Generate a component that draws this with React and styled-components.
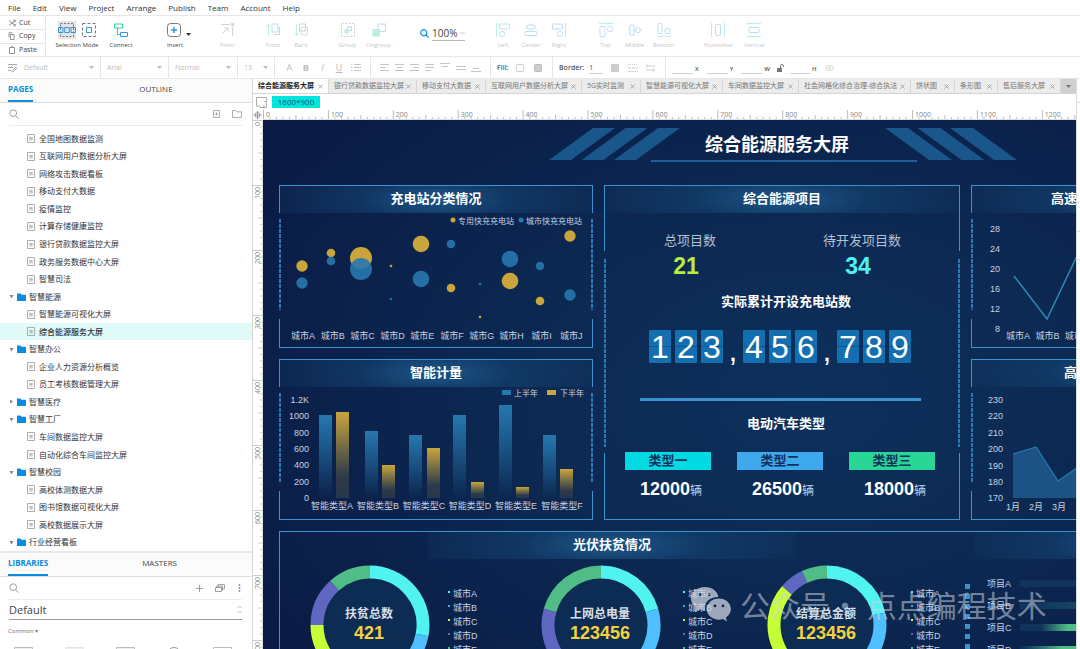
import React from "react";
import styled, { createGlobalStyle, css } from "styled-components";

const UI = '"Open Sans", "Noto Sans CJK SC", sans-serif';
const BOARD = '"Liberation Sans", "Noto Sans CJK SC", sans-serif';

const GlobalStyle = createGlobalStyle`
  * { box-sizing: border-box; }
  html, body, #root { height: 100%; margin: 0; }
  body { font-family: ${UI}; font-size: 8px; color: #444; background: #fff; overflow: hidden; }
  button, input, select { font: inherit; color: inherit; background: none; border: 0; padding: 0; margin: 0; }
  h1, h2, h3, p, ul { margin: 0; padding: 0; font-weight: normal; }
  ul { list-style: none; }
  svg { display: block; flex: none; }
`;

const Screen = styled.div`
  display: flex;
  flex-direction: column;
  height: 100vh;
`;

/* ---------- menu and tool bars ---------- */

const MenuBar = styled.nav`
  display: flex;
  flex: none;
  align-items: center;
  gap: 12px;
  height: 16px;
  padding: 0 8px;
  border-bottom: 1px solid #e6e6e6;
`;

const MenuItem = styled.button`
  font-size: 8px;
  line-height: 14px;
  color: #333;
`;

const ToolBar = styled.div`
  display: flex;
  flex: none;
  height: 41px;
  border-bottom: 1px solid #e6e6e6;
`;

const Clipboard = styled.div`
  display: grid;
  grid-template-rows: repeat(3, 1fr);
  width: 46px;
  border-right: 1px solid #e6e6e6;
`;

const ClipButton = styled.button`
  display: flex;
  align-items: center;
  gap: 3px;
  padding-left: 8px;
  font-size: 7px;
  line-height: 10px;
  & + & { border-top: 1px solid #e6e6e6; }
`;

const ToolGroup = styled.div`
  display: flex;
  margin-left: ${(p) => p.$before}px;
`;

const Tool = styled.button`
  display: flex;
  flex-direction: column;
  align-items: center;
  width: ${(p) => p.$width}px;
  padding-top: 5px;
  font-size: 6px;
  line-height: 8px;
  white-space: nowrap;
  opacity: ${(p) => (p.$off ? 0.32 : 1)};
`;

const ToolIcons = styled.span`
  display: flex;
  align-items: center;
  justify-content: center;
  gap: 6px;
  height: 18px;
  margin-bottom: 2px;
`;

const Pressed = styled.span`
  padding: 2px 0;
  background: #e4e4e4;
`;

const Zoom = styled.label`
  display: flex;
  align-items: center;
  align-self: flex-start;
  gap: 3px;
  width: 46px;
  height: 25px;
  margin: 0 23px 0 26px;
  padding-top: 9px;
`;

const ZoomBox = styled.span`
  display: flex;
  align-items: center;
  border-bottom: 1px solid #b5b5b5;
`;

const ZoomSelect = styled.select`
  appearance: none;
  width: 28px;
  font-size: 10px;
  line-height: 14px;
`;

const FormatBar = styled.div`
  display: flex;
  flex: none;
  align-items: stretch;
  height: 22px;
  border-bottom: 1px solid #e6e6e6;
`;

const FormatCell = styled.div`
  display: flex;
  align-items: center;
  gap: ${(p) => p.$gap || 0}px;
  width: ${(p) => p.$width}px;
  padding: 0 6px;
  font-size: 7px;
  color: ${(p) => (p.$dark ? "#555" : "#bbb")};
  border-right: 1px solid #e6e6e6;
  &:last-child { border-right: 0; }
`;

const Choice = styled.select`
  appearance: none;
  flex: 1;
  min-width: 0;
  font-size: 7px;
`;

const IconButton = styled.button`
  display: flex;
  justify-content: center;
  width: ${(p) => p.$width || 18}px;
`;

const Letter = styled(IconButton)`
  font-size: 9px;
  line-height: 12px;
  ${(p) => p.$bold && css`font-weight: 700;`}
  ${(p) => p.$italic && css`font-style: italic;`}
  ${(p) => p.$under && css`text-decoration: underline;`}
`;

const FieldLabel = styled.label`
  display: flex;
  align-items: flex-end;
  gap: 2px;
  font-size: 6px;
  font-weight: 600;
  line-height: 10px;
`;

const Field = styled.input`
  width: ${(p) => p.$width}px;
  height: 12px;
  font-size: 7px;
  border-bottom: 1px solid #ccc;
`;

const Caption = styled.span`
  font-weight: 600;
`;

/* ---------- sidebar ---------- */

const Work = styled.div`
  display: flex;
  flex: 1;
  min-height: 0;
`;

const Sidebar = styled.aside`
  display: flex;
  flex: none;
  flex-direction: column;
  width: 253px;
  border-right: 1px solid #d4d4d4;
`;

const PaneTabs = styled.div`
  display: flex;
  flex: none;
  height: 24px;
  background: #fbfbfb;
  border-bottom: 1px solid #dcdcdc;
`;

const PaneTab = styled.button`
  align-self: flex-end;
  height: 22px;
  margin-left: ${(p) => p.$before}px;
  padding-bottom: 2px;
  font-size: 8px;
  line-height: 16px;
  color: ${(p) => (p.$on ? "#0c8ce0" : "#444")};
  font-weight: ${(p) => (p.$on ? 700 : 400)};
  border-bottom: 2px solid ${(p) => (p.$on ? "#0c8ce0" : "transparent")};
`;

const SearchRow = styled.div`
  display: flex;
  flex: none;
  align-items: center;
  gap: 12px;
  height: 23px;
  margin: 0 10px 0 9px;
  border-bottom: 1px solid #ececec;
`;

const SearchInput = styled.input`
  flex: 1;
  min-width: 0;
`;

const Tree = styled.ul`
  display: grid;
  flex: 1;
  grid-auto-rows: 1fr;
  min-height: 0;
  padding-top: 4px;
`;

const TreeRow = styled.li`
  display: flex;
  align-items: center;
  gap: ${(p) => (p.$folder ? 3 : 4)}px;
  padding-left: ${(p) => (p.$folder ? 9 : 27)}px;
  font-size: 8px;
  line-height: 12px;
  color: #333;
  background: ${(p) => (p.$on ? "#e0faf8" : "transparent")};
  font-weight: ${(p) => (p.$on ? 500 : 400)};
`;

const Libraries = styled.section`
  flex: none;
  height: 98px;
  overflow: hidden;
  border-top: 2px solid #e8e8e8;
`;

const LibrarySelect = styled.label`
  display: flex;
  align-items: center;
  height: 20px;
  margin: 0 10px 0 9px;
  border-bottom: 1px solid #999;
`;

const LibraryChoice = styled.select`
  appearance: none;
  flex: 1;
  font-size: 11px;
  line-height: 16px;
`;

const LibraryGroup = styled.button`
  display: block;
  padding: 6px 8px 7px;
  font-size: 6px;
  line-height: 10px;
  color: #777;
`;

const Widgets = styled.div`
  display: flex;
  justify-content: space-between;
  padding: 4px 20px 0 14px;
`;

/* ---------- document area ---------- */

const Doc = styled.main`
  display: flex;
  flex: 1;
  flex-direction: column;
  min-width: 0;
`;

const DocTabs = styled.div`
  display: flex;
  flex: none;
  height: 15px;
  background: #ececec;
  border-bottom: 1px solid #d4d4d4;
`;

const DocTab = styled.div`
  display: flex;
  align-items: center;
  justify-content: space-between;
  width: ${(p) => p.$width}px;
  padding: 0 5px;
  font-size: 7px;
  line-height: 12px;
  white-space: nowrap;
  color: ${(p) => (p.$on ? "#222" : "#777")};
  font-weight: ${(p) => (p.$on ? 700 : 400)};
  background: ${(p) => (p.$on ? "#fff" : "transparent")};
  border-right: 1px solid #d8d8d8;
`;

const TabMenu = styled.button`
  display: flex;
  flex: 1;
  align-items: center;
  justify-content: center;
  background: #d0d0d0;
`;

const PageBar = styled.div`
  display: flex;
  flex: none;
  align-items: center;
  gap: 5px;
  height: 16px;
  padding-left: 3px;
`;

const SizeChip = styled.button`
  width: 48px;
  font-size: 8px;
  line-height: 12px;
  color: #23565e;
  background: #00e5de;
`;

const Stage = styled.div`
  display: grid;
  flex: 1;
  grid-template-columns: 10px 1fr;
  grid-template-rows: 10px 1fr;
  min-height: 0;
  overflow: hidden;
`;

const RulerCell = styled.div`
  overflow: hidden;
  min-width: 0;
  min-height: 0;
`;

const RulerText = styled.text`
  font-family: ${UI};
  font-size: 7px;
  fill: #888;
`;

const Inspector = styled.aside`
  flex: none;
  width: 4px;
  padding-top: 23px;
  border-left: 1px solid #ddd;
`;

const InspectorRow = styled.div`
  height: ${(p) => p.$height}px;
  border-top: 1px solid #ddd;
`;

/* ---------- artboard ---------- */

const Viewport = styled.div`
  position: relative;
  min-width: 0;
  min-height: 0;
  overflow: hidden;
`;

const Artboard = styled.article`
  width: 1040px;
  min-height: 585px;
  font-family: ${BOARD};
  color: #fff;
  background: radial-gradient(ellipse 60% 70% at 52% 48%, #0d305c 0%, #0c2952 45%, #0a1c46 100%);
`;

const BoardHeader = styled.header`
  display: grid;
  justify-items: center;
  align-items: center;
  height: 65px;
  padding-bottom: 15px;
  & > * { grid-area: 1 / 1; }
`;

const BoardTitle = styled.h1`
  padding-right: 12px;
  font-size: 18px;
  line-height: 26px;
  font-weight: 700;
`;

const BoardGrid = styled.div`
  display: grid;
  grid-template-columns: 314px 356px 314px;
  grid-template-rows: 163px 161px 162px;
  column-gap: 11px;
  row-gap: 11px;
  padding: 0 16px;
`;

const line = "#3a93cf";
const dash = "#2c7ab3";

const Panel = styled.section`
  display: grid;
  min-width: 0;
  grid-row: ${(p) => p.$row || "auto"};
  grid-column: ${(p) => p.$column || "auto"};
  & > * { grid-area: 1 / 1; min-width: 0; }
`;

const Frame = styled.div`
  display: flex;
  flex-direction: column;
`;

const FrameEdge = styled.div`
  flex: none;
  height: ${(p) => p.$height}px;
  border: 1px solid ${line};
  ${(p) => (p.$side === "top" ? "border-bottom: 0;" : "border-top: 0;")}
`;

const FrameDashes = styled.div`
  flex: 1;
  margin: ${(p) => p.$gapTop}px 0 ${(p) => p.$gapBottom}px;
  --dash: repeating-linear-gradient(${dash} 0 4px, transparent 4px 5px);
  background: var(--dash) left / 2px 100% no-repeat, var(--dash) right / 2px 100% no-repeat;
`;

const FullFrame = styled.div`
  border: 1px solid ${line};
`;

const PanelContent = styled.div`
  display: flex;
  flex-direction: column;
`;

const PanelTitle = styled.h2`
  flex: none;
  width: ${(p) => (p.$width ? `${p.$width}px` : "auto")};
  height: 28px;
  margin-left: ${(p) => p.$before || 0}px;
  padding-left: ${(p) => p.$lead || 0}px;
  font-size: 13px;
  line-height: 28px;
  font-weight: 700;
  text-align: ${(p) => (p.$lead ? "left" : "center")};
  white-space: nowrap;
  overflow: hidden;
  background: radial-gradient(ellipse 50% 150% at 50% 50%, rgba(32, 98, 150, 0.8), rgba(22, 72, 120, 0.5) 50%, rgba(20, 66, 110, 0.2));
`;

const ChartText = styled.text`
  font-family: ${BOARD};
  font-size: ${(p) => p.$size || 9}px;
  font-weight: ${(p) => p.$weight || 400};
  fill: ${(p) => p.$fill || "#c8d2e0"};
  dominant-baseline: central;
`;

const ChartBox = styled.svg`
  width: 100%;
  height: auto;
  overflow: hidden;
`;

const StatRow = styled.div`
  display: grid;
  grid-template-columns: 1fr 1fr;
  padding: 19px 12px 0 0;
  text-align: center;
`;

const StatName = styled.p`
  font-size: 13px;
  line-height: 18px;
  color: #b4c1d4;
`;

const StatValue = styled.p`
  padding-right: 8px;
  font-size: 23px;
  line-height: 32px;
  font-weight: 700;
  color: ${(p) => p.$color};
`;

const SubTitle = styled.h3`
  margin-top: ${(p) => p.$before}px;
  padding-left: 8px;
  font-size: 13px;
  line-height: 20px;
  font-weight: 700;
  text-align: center;
`;

const Counter = styled.div`
  display: flex;
  justify-content: center;
  height: 33px;
  margin-top: 18px;
  padding-right: 4px;
`;

const CounterGroup = styled.div`
  display: flex;
  gap: 4px;
`;

const Digit = styled.span`
  width: 22px;
  height: 33px;
  font-size: 32px;
  line-height: 35px;
  text-align: center;
  border-radius: 1px;
  background: linear-gradient(#146fb0 0 16px, #0c5690 16px 17px, #146fb0 17px);
`;

const Comma = styled.span`
  width: 20px;
  font-size: 32px;
  line-height: 40px;
  text-align: center;
`;

const Rule = styled.hr`
  width: 281px;
  height: 3px;
  margin: 35px 0 0 36px;
  border: 0;
  background: ${line};
`;

const TypeRow = styled.div`
  display: flex;
  justify-content: space-between;
  margin-top: 18px;
  padding: 0 25px 0 21px;
`;

const TypeCard = styled.div`
  width: 86px;
  text-align: center;
`;

const TypeName = styled.p`
  font-size: 13px;
  line-height: 18px;
  font-weight: 700;
  color: #12305c;
  background: ${(p) => p.$color};
`;

const TypeValue = styled.p`
  margin-top: 9px;
  padding-left: 6px;
  font-size: 18px;
  line-height: 20px;
  font-weight: 700;
  white-space: nowrap;
`;

const Unit = styled.span`
  font-size: 12px;
  font-weight: 400;
  color: #c8d2e0;
`;

const TitleLine = styled.div`
  display: flex;
`;

const RingRow = styled.div`
  display: grid;
  grid-template-columns: 138px 93px 142px 84px 144px 54px 22px 1fr;
  padding: 6px 0 0 31px;
`;

const Legend = styled.ul`
  padding-top: 22px;
  font-size: 9px;
  color: #c8d2e0;
`;

const LegendItem = styled.li`
  display: flex;
  gap: 3px;
  height: 14px;
  line-height: 14px;
  white-space: nowrap;
  &::before {
    content: "";
    width: 2px;
    height: 2px;
    margin-top: 4px;
    background: ${(p) => p.$color};
  }
`;

const Markers = styled.div`
  display: flex;
  flex-direction: column;
  gap: 5px;
  padding-top: 19px;
`;

const Marker = styled.span`
  width: 5px;
  height: 5px;
  background: ${line};
`;

const Progress = styled.ul`
  padding-top: 7px;
  font-size: 9px;
  color: #c8d2e0;
`;

const ProgressRow = styled.li`
  display: flex;
  align-items: center;
  gap: 7px;
  height: 22px;
  white-space: nowrap;
`;

const ProgressName = styled.span`
  width: 26px;
`;

const Track = styled.span`
  flex: 1;
  height: 7px;
  background: linear-gradient(90deg, #11345d ${(p) => p.$from}%, ${(p) => p.$color} ${(p) => p.$to}%);
`;

const Watermark = styled.p`
  position: absolute;
  left: 427px;
  top: 464px;
  display: flex;
  align-items: center;
  gap: 8px;
  font-family: "Noto Sans CJK SC", sans-serif;
  font-size: 30px;
  line-height: 40px;
  font-weight: 400;
  white-space: nowrap;
  color: rgba(205, 212, 222, 0.55);
`;

/* ---------- icons ---------- */

const B = "#2d9be0";
const G = "#2fcf9e";
const K = "#777";

const Icon = ({ w = 14, h = 14, c = K, sw = 1, children }) => (
  <svg width={w} height={h} viewBox={`0 0 ${w} ${h}`} fill="none" stroke={c} strokeWidth={sw} aria-hidden="true">
    {children}
  </svg>
);

const Caret = ({ c = "#999" }) => (
  <Icon w={5} h={3}><path d="M0 0h5l-2.500 3z" fill={c} stroke="none" /></Icon>
);

const Chevron = () => (
  <Icon w={5} h={4} c="#aaa" sw={0.8}><path d="M.5 1l2 2 2-2" /></Icon>
);

const Lens = ({ c = "#888", s = 10, sw = 0.8 }) => (
  <Icon w={s} h={s} c={c} sw={sw}>
    <circle cx={s * 0.42} cy={s * 0.42} r={s * 0.34} />
    <path d={`M${s * 0.66} ${s * 0.66}L${s * 0.97} ${s * 0.97}`} />
  </Icon>
);

const Cross = () => (
  <Icon w={5} h={5} c="#888" sw={0.7}><path d="M.5.5l4 4M4.500.5l-4 4" /></Icon>
);

const SheetIcon = () => (
  <Icon w={8} h={9} c="#999" sw={0.8}>
    <path d="M.5.5h7v8h-7z" /><path d="M2.200 3.300h3.600M2.200 4.600h3.600M2.200 5.900h3.600" strokeWidth=".7" />
  </Icon>
);

const FolderIcon = () => (
  <Icon w={9} h={8}><path d="M0 .5h3.500l1 1.200H9V8H0z" fill="#0c8ce0" stroke="none" /></Icon>
);

const Twist = ({ open }) => (
  <Icon w={5} h={5}>
    <path d={open ? "M.5 1h4L2.500 4.500z" : "M1 .5v4L4 2.500z"} fill="#888" stroke="none" />
  </Icon>
);

const toolIcons = {
  contained: (
    <Icon w={18} h={14}>
      <path d="M2.500.5h13v13h-13z" strokeDasharray="2 1.500" />
      <g stroke={B}><path d="M.5 4.500h4.500v5H.5zM6.700 4.500h4.600v5H6.700zM13 4.500h4.500v5H13z" /></g>
    </Icon>
  ),
  intersect: (
    <Icon><path d="M.5.5h13v13H.5z" strokeDasharray="3 2" /><path d="M4.500 4.500h5v5h-5z" stroke={B} /></Icon>
  ),
  connect: (
    <Icon>
      <path d="M.5 1h8v4h-8z" stroke={G} /><path d="M6.500 9.500h7v4h-7z" stroke={B} /><path d="M3.500 5v6.500h3" stroke={G} />
    </Icon>
  ),
  insert: (
    <Icon w={38}>
      <rect x="11.500" y=".5" width="13" height="13" rx="3" />
      <path d="M18 4v6M15 7h6" stroke={B} strokeWidth="1.500" />
      <path d="M30 10h5l-2.500 3z" fill="#333" stroke="none" />
    </Icon>
  ),
  point: (
    <Icon><path d="M1 1.500h9M12.500 4v9" /><path d="M11 0h3v3h-3z" fill={B} stroke="none" /><path d="M3 10l5-5M4.500 5H8v3.500" /></Icon>
  ),
  front: (
    <Icon><path d="M2.500 13V1.500M.5 3.500l2-2 2 2" stroke={G} /><path d="M6 1h6v8H6z" stroke={B} /><path d="M8 11.500h5.500V4" /></Icon>
  ),
  back: (
    <Icon><path d="M2.500 1v11.500M.5 10.500l2 2 2-2" stroke={G} /><path d="M5.500 1h6v7h-6z" /><rect x="7" y="4" width="6.500" height="8" rx="1.500" stroke={B} /></Icon>
  ),
  group: (
    <Icon><path d="M.5.5h13v13H.5z" strokeDasharray="2 1.500" /><path d="M6.500 3.500h4v4h-4z" stroke={B} /><path d="M3.500 6h4v4.500h-4z" fill={G} stroke="none" /></Icon>
  ),
  ungroup: (
    <Icon><path d="M6 1h7.500v7.500H6z" stroke={B} /><path d="M.5 6H8v7.500H.5z" fill={G} stroke="none" /></Icon>
  ),
  left: (
    <Icon><path d="M.5 0v14" stroke={G} /><g stroke={B}><rect x="3.500" y="1" width="10" height="5" rx="1" /><rect x="3.500" y="8.500" width="5" height="5" rx="2" /></g></Icon>
  ),
  center: (
    <Icon><path d="M7 0v14" stroke={G} /><g stroke={B} fill="#fff"><rect x="3" y="2" width="8" height="4" rx="1" /><rect x="1" y="8.500" width="12" height="4" rx="1" /></g></Icon>
  ),
  right: (
    <Icon><path d="M13.500 0v14" stroke={G} /><g stroke={B}><rect x=".5" y="1" width="10" height="5" rx="1" /><rect x="5.500" y="8.500" width="5" height="5" rx="2" /></g></Icon>
  ),
  top: (
    <Icon><path d="M0 .5h14" stroke={G} /><g stroke={B}><rect x="1" y="3.500" width="5" height="10" rx="1" /><rect x="8.500" y="3.500" width="5" height="5" rx="2" /></g></Icon>
  ),
  middle: (
    <Icon><path d="M0 7h14" stroke={G} /><g stroke={B} fill="#fff"><rect x="2" y="2" width="4" height="10" rx="1" /><rect x="8" y="4.500" width="4" height="5" rx="1.500" /></g></Icon>
  ),
  bottom: (
    <Icon><path d="M0 13.500h14" stroke={G} /><g stroke={B}><rect x="1" y=".5" width="4" height="10" rx="1" /><rect x="8" y="5.500" width="5" height="5" rx="1.500" /></g></Icon>
  ),
  horizontal: (
    <Icon><path d="M.5 0v14M13.500 0v14" stroke={G} /><rect x="4.500" y="1.500" width="5" height="11" rx="1" stroke={B} /></Icon>
  ),
  vertical: (
    <Icon><path d="M0 .5h14M0 13.500h14" stroke={G} /><rect x="2" y="4.500" width="10" height="5" rx="1" stroke={B} /></Icon>
  ),
};

const Lines = ({ d, w = 10, h = 9 }) => <Icon w={w} h={h} c="#c4c4c4" sw={1}><path d={d} /></Icon>;

const WeChatIcon = () => (
  <svg width="42" height="36" viewBox="0 0 42 36" fill="rgba(205,212,222,.75)" aria-hidden="true">
    <path fillRule="evenodd" d="M15 1C6.500 1 1 6.300 1 12.700c0 3.700 1.900 6.700 5 8.900L4.800 26l5-2.600c1.600.4 3.200.7 5 .7-1.300-7.300 4.700-13.200 13.700-13.200C27.300 5 22 1 15 1zM10.200 6.800a1.700 1.700 0 110 3.400 1.700 1.700 0 010-3.400zm9.400 0a1.700 1.700 0 110 3.400 1.700 1.700 0 010-3.400z" />
    <path fillRule="evenodd" d="M29 12.500c-7 0-12.300 4.700-12.300 10.600S22 33.700 29 33.700c1.400 0 2.800-.3 4-.6l4 2.300-1.100-3.900c3.100-2.100 5-5 5-8.400 0-5.900-5.300-10.600-11.900-10.600zm-4 6a1.400 1.400 0 110 2.800 1.400 1.400 0 010-2.800zm8 0a1.400 1.400 0 110 2.800 1.400 1.400 0 010-2.800z" />
  </svg>
);

/* ---------- data ---------- */

const menus = ["File", "Edit", "View", "Project", "Arrange", "Publish", "Team", "Account", "Help"];

const toolGroups = [
  { before: 14, off: true, tools: [["Point", "point", 36]] },
  { before: 14, off: true, tools: [["Front", "front", 28], ["Back", "back", 28]] },
  { before: 17, off: true, tools: [["Group", "group", 31], ["Ungroup", "ungroup", 31]] },
];

const alignGroups = [
  { before: 0, off: true, tools: [["Left", "left", 28], ["Center", "center", 28], ["Right", "right", 28]] },
  { before: 18, off: true, tools: [["Top", "top", 29], ["Middle", "middle", 29], ["Bottom", "bottom", 29]] },
  { before: 22, off: true, tools: [["Horizontal", "horizontal", 36], ["Vertical", "vertical", 36]] },
];

const tree = [
  ["全国地图数据监测"], ["互联网用户数据分析大屏"], ["网络攻击数据看板"], ["移动支付大数据"], ["疫情监控"],
  ["计算存储健康监控"], ["银行贷款数据监控大屏"], ["政务服务数据中心大屏"], ["智慧司法"],
  ["智慧能源", "open"], ["智慧能源可视化大屏"], ["综合能源服务大屏", "on"],
  ["智慧办公", "open"], ["企业人力资源分析概览"], ["员工考核数据管理大屏"],
  ["智慧医疗", "closed"],
  ["智慧工厂", "open"], ["车间数据监控大屏"], ["自动化综合车间监控大屏"],
  ["智慧校园", "open"], ["高校体测数据大屏"], ["图书馆数据可视化大屏"], ["高校数据展示大屏"],
  ["行业经营看板", "open"],
];

const docTabs = [
  ["综合能源服务大屏", 76], ["银行贷款数据监控大屏", 88], ["移动支付大数据", 69], ["互联网用户数据分析大屏", 96],
  ["5G实时监测", 59], ["智慧能源可视化大屏", 82], ["车间数据监控大屏", 76], ["社会网格化综合治理-综合执法", 112],
  ["饼状图", 44], ["条形图", 43], ["售后服务大屏", 63],
];

const YELLOW = "#c9a53c";
const BLUE = "#2678b0";

const bubbles = [
  [23, 81, 5.700, YELLOW], [52, 68, 4.300, YELLOW], [82, 73, 11, YELLOW], [112, 81, 1.300, YELLOW], [142, 59, 8.300, YELLOW],
  [172, 103, 4.300, YELLOW], [201, 132, 1.300, YELLOW], [231, 96, 8.300, YELLOW], [261, 116, 4.300, YELLOW], [291, 51, 5.700, YELLOW],
  [23, 98, 5.700, BLUE], [52, 76, 4.300, BLUE], [82, 84, 11, BLUE], [112, 114, 1.300, BLUE], [142, 94, 8.300, BLUE],
  [172, 59, 4.300, BLUE], [201, 99, 1.300, BLUE], [231, 74, 8.300, BLUE], [261, 81, 4.300, BLUE], [291, 110, 5.700, BLUE],
];

const bars = [
  [40, 56, 57, 53], [86, 72, 103, 106], [130, 76, 148, 89], [174, 56, 192, 123], [220, 46, 237, 128], [264, 76, 281, 110],
];

const CY = "#50f2f2", SK = "#4fbfff", LI = "#c6ff35", PU = "#6067c0", GR = "#50bd86";
const cities = [["城市A", CY], ["城市B", "#3fa6ee"], ["城市C", LI], ["城市D", PU], ["城市E", GR]];
const rings = [
  { name: "扶贫总数", value: "421", parts: [[0, 101, CY], [101, 190, SK], [190, 270, LI], [270, 318, PU], [318, 360, GR]] },
  { name: "上网总电量", value: "123456", parts: [[0, 74, CY], [74, 150, SK], [150, 220, LI], [220, 286, PU], [286, 360, GR]] },
  { name: "结算总金额", value: "123456", parts: [[0, 78, CY], [78, 180, SK], [180, 311, LI], [311, 335, PU], [335, 360, GR]] },
];

/* ---------- pieces ---------- */

const Rulers = {
  Horizontal: () => (
    <svg width="1040" height="10">
      {Array.from({ length: 160 }, (_, i) => (
        <path key={i} d={`M${i * 6.490 + 0.500} ${i % 10 === 0 ? 0 : i % 5 === 0 ? 5 : 7}V10`} stroke="#bbb" />
      ))}
      <path d="M0 9.500H1040" stroke="#ddd" />
      {Array.from({ length: 13 }, (_, i) => (
        <RulerText key={i} x={i * 64.900 + 3} y="7">{i * 100}</RulerText>
      ))}
    </svg>
  ),
  Vertical: () => (
    <svg width="10" height="585">
      {Array.from({ length: 90 }, (_, i) => (
        <path key={i} d={`M${i % 10 === 0 ? 0 : i % 5 === 0 ? 5 : 7} ${i * 6.500 + 0.500}H10`} stroke="#ccc" />
      ))}
      <path d="M9.500 0V585" stroke="#ddd" />
      {Array.from({ length: 9 }, (_, i) => (
        <RulerText key={i} transform={`translate(7 ${i * 65 + 2}) rotate(-90)`} textAnchor="end">{i * 100}</RulerText>
      ))}
    </svg>
  ),
};

const ToolSet = ({ groups }) =>
  groups.map((g) => (
    <ToolGroup key={g.tools[0][0]} $before={g.before}>
      {g.tools.map(([name, icon, width]) => (
        <Tool key={name} $width={width} $off={g.off}>
          <ToolIcons>{toolIcons[icon]}</ToolIcons>
          {name}
        </Tool>
      ))}
    </ToolGroup>
  ));

const ChoiceCell = ({ width, value, label, icon }) => (
  <FormatCell $width={width} $gap={6}>
    {icon}
    <Choice aria-label={label} defaultValue={value}><option>{value}</option></Choice>
    <Caret c="#bbb" />
  </FormatCell>
);

const BracketFrame = ({ top = 28, bottom = 29, gapTop = 6, gapBottom = 9 }) => (
  <Frame>
    <FrameEdge $height={top} $side="top" />
    <FrameDashes $gapTop={gapTop} $gapBottom={gapBottom} />
    <FrameEdge $height={bottom} $side="bottom" />
  </Frame>
);

const BubbleChart = () => (
  <ChartBox viewBox="0 28 314 133">
    {bubbles.map(([x, y, r, c], i) => <circle key={i} cx={x} cy={y} r={r} fill={c} fillOpacity={i > 9 ? 0.9 : 1} />)}
    <circle cx="174" cy="35" r="2.500" fill={YELLOW} />
    <ChartText x="179" y="36" $size={8}>专用快充充电站</ChartText>
    <circle cx="242" cy="35" r="2.500" fill={BLUE} />
    <ChartText x="247" y="36" $size={8}>城市快充充电站</ChartText>
    {"ABCDEFGHIJ".split("").map((c, i) => (
      <ChartText key={c} x={24 + i * 29.800} y="151" textAnchor="middle">{`城市${c}`}</ChartText>
    ))}
  </ChartBox>
);

const BarChart = () => (
  <ChartBox viewBox="0 28 314 133">
    <defs>
      <linearGradient id="barBlue" x1="0" y1="0" x2="0" y2="1">
        <stop offset="0" stopColor={BLUE} /><stop offset="1" stopColor={BLUE} stopOpacity="0" />
      </linearGradient>
      <linearGradient id="barYellow" x1="0" y1="0" x2="0" y2="1">
        <stop offset="0" stopColor={YELLOW} /><stop offset=".75" stopColor="#2d3a4a" /><stop offset="1" stopColor="#27364b" />
      </linearGradient>
    </defs>
    <rect x="223" y="31" width="9" height="5" fill={BLUE} />
    <ChartText x="235" y="34" $size={8}>上半年</ChartText>
    <rect x="268" y="31" width="9" height="5" fill={YELLOW} />
    <ChartText x="281" y="34" $size={8}>下半年</ChartText>
    {["1.2K", "1000", "800", "600", "400", "200", "0"].map((t, i) => (
      <ChartText key={t} x="30" y={41 + i * 16.300} textAnchor="end">{t}</ChartText>
    ))}
    {bars.map(([bx, by, yx, yy], i) => (
      <g key={i}>
        <rect x={bx} y={by} width="13" height={139 - by} fill="url(#barBlue)" />
        <rect x={yx} y={yy} width="13" height={139 - yy} fill="url(#barYellow)" />
        <ChartText x={53 + i * 46} y="147" textAnchor="middle">{`智能类型${"ABCDEF"[i]}`}</ChartText>
      </g>
    ))}
  </ChartBox>
);

const LineChart = () => (
  <ChartBox viewBox="0 28 314 133">
    {[28, 24, 20, 16, 12, 8].map((n, i) => (
      <ChartText key={n} x="29" y={44 + i * 19.900} textAnchor="end">{n}</ChartText>
    ))}
    <path d="M43 91L76 134L114 54" fill="none" stroke="#2f86b4" strokeWidth="1.500" />
    {["A", "B", "C"].map((c, i) => (
      <ChartText key={c} x={47 + i * 29.500} y="151" textAnchor="middle">{`城市${c}`}</ChartText>
    ))}
  </ChartBox>
);

const AreaChart = () => (
  <ChartBox viewBox="0 28 314 133">
    {[230, 220, 210, 200, 190, 180, 170].map((n, i) => (
      <ChartText key={n} x="32" y={41 + i * 16.400} textAnchor="end">{n}</ChartText>
    ))}
    <path d="M42 95L65 88L87 122L110 106V139H42z" fill="#1a5384" />
    <path d="M42 95L65 88L87 122L110 106" fill="none" stroke="#2678ae" strokeWidth="1.300" />
    {[1, 2, 3].map((m, i) => (
      <ChartText key={m} x={42 + i * 23} y="148" textAnchor="middle">{`${m}月`}</ChartText>
    ))}
  </ChartBox>
);

const at = (deg, r) => {
  const a = ((deg - 90) * Math.PI) / 180;
  return `${(60 + r * Math.cos(a)).toFixed(2)} ${(60 + r * Math.sin(a)).toFixed(2)}`;
};

const Ring = ({ name, value, parts }) => (
  <svg width="120" height="120" viewBox="0 0 120 120">
    <circle cx="60" cy="60" r="47" fill="#0c2c54" />
    {parts.map(([from, to, color]) => (
      <path key={from} d={`M${at(from, 53)}A53 53 0 0 1 ${at(to, 53)}`} fill="none" stroke={color} strokeWidth="13" />
    ))}
    <ChartText x="59" y="49" $size={12} $weight={700} $fill="#d8dfe8" textAnchor="middle">{name}</ChartText>
    <ChartText x="59" y="68" $size={18} $weight={700} $fill="#f5d03e" textAnchor="middle">{value}</ChartText>
  </svg>
);

const HeaderArt = () => (
  <svg width="468" height="34" viewBox="0 0 468 34" aria-hidden="true">
    {[0, 32.500, 65].map((x) => (
      <g key={x} fill="#19568a">
        <path d={`M${x} 32h22l44-32H${x + 44}z`} />
        <path d={`M${336 + x} 0h23l44 32h-23z`} />
      </g>
    ))}
    <path d="M102 33H368" stroke="#1a5f96" strokeWidth="2" />
  </svg>
);

const Dashboard = () => (
  <Artboard>
    <BoardHeader>
      <HeaderArt />
      <BoardTitle>综合能源服务大屏</BoardTitle>
    </BoardHeader>
    <BoardGrid>
      <Panel>
        <PanelContent><PanelTitle>充电站分类情况</PanelTitle><BubbleChart /></PanelContent>
        <BracketFrame />
      </Panel>
      <Panel $row="1 / 3" $column="2">
        <PanelContent>
          <PanelTitle>综合能源项目</PanelTitle>
          <StatRow>
            <div><StatName>总项目数</StatName><StatValue $color="#b9ec3c">21</StatValue></div>
            <div><StatName>待开发项目数</StatName><StatValue $color="#50f2f2">34</StatValue></div>
          </StatRow>
          <SubTitle $before={10}>实际累计开设充电站数</SubTitle>
          <Counter>
            {["123", "456", "789"].map((group, i) => (
              <React.Fragment key={group}>
                {i > 0 && <Comma>,</Comma>}
                <CounterGroup>{group.split("").map((d) => <Digit key={d}>{d}</Digit>)}</CounterGroup>
              </React.Fragment>
            ))}
          </Counter>
          <Rule />
          <SubTitle $before={13}>电动汽车类型</SubTitle>
          <TypeRow>
            {[["类型一", "#00dae2", "12000"], ["类型二", "#3fa9ee", "26500"], ["类型三", "#28d796", "18000"]].map(([n, c, v]) => (
              <TypeCard key={n}>
                <TypeName $color={c}>{n}</TypeName>
                <TypeValue>{v}<Unit>辆</Unit></TypeValue>
              </TypeCard>
            ))}
          </TypeRow>
        </PanelContent>
        <BracketFrame top={66} bottom={67} gapTop={8} gapBottom={6} />
      </Panel>
      <Panel $column="3">
        <PanelContent><PanelTitle $lead={80}>高速</PanelTitle><LineChart /></PanelContent>
        <BracketFrame />
      </Panel>
      <Panel>
        <PanelContent><PanelTitle>智能计量</PanelTitle><BarChart /></PanelContent>
        <BracketFrame />
      </Panel>
      <Panel $column="3">
        <PanelContent><PanelTitle $lead={93}>高</PanelTitle><AreaChart /></PanelContent>
        <BracketFrame />
      </Panel>
      <Panel $column="1 / 4">
        <PanelContent>
          <TitleLine>
            <PanelTitle $width={368} $before={149}>光伏扶贫情况</PanelTitle>
            <PanelTitle $width={310} $before={179} />
          </TitleLine>
          <RingRow>
            {rings.map((ring) => (
              <React.Fragment key={ring.name}>
                <Ring {...ring} />
                <Legend>{cities.map(([c, color]) => <LegendItem key={c} $color={color}>{c}</LegendItem>)}</Legend>
              </React.Fragment>
            ))}
            <Markers>{[0, 1, 2, 3, 4, 5, 6].map((i) => <Marker key={i} />)}</Markers>
            <Progress>
              {[["项目A", 20, 60, "#1d5a70"], ["项目B", 5, 60, "#23706f"], ["项目C", 8, 18, "#50bd86"], ["项目D", 2, 16, "#50bd86"]].map(([n, from, to, c]) => (
                <ProgressRow key={n}>
                  <ProgressName>{n}</ProgressName>
                  <Track $from={from} $to={to} $color={c} />
                </ProgressRow>
              ))}
            </Progress>
          </RingRow>
        </PanelContent>
        <FullFrame />
      </Panel>
    </BoardGrid>
  </Artboard>
);

const TopBars = () => (
  <>
    <MenuBar>{menus.map((m) => <MenuItem key={m}>{m}</MenuItem>)}</MenuBar>
    <ToolBar>
      <Clipboard>
        <ClipButton>
          <Icon w={8} h={8} sw={0.8}><path d="M1 1.500l5 4M1 6.500l5-4" /><circle cx="6.600" cy="1.800" r="1" /><circle cx="6.600" cy="6.200" r="1" /></Icon>
          Cut
        </ClipButton>
        <ClipButton>
          <Icon w={8} h={8} sw={0.8}><path d="M2.500 2.500h3.500v5H2.500zM1 5.500V.8h3.500" /></Icon>
          Copy
        </ClipButton>
        <ClipButton>
          <Icon w={8} h={8} sw={0.8}><path d="M1.500 1.500h5v6h-5zM3 .8h2" /></Icon>
          Paste
        </ClipButton>
      </Clipboard>
      <ToolGroup $before={8}>
        <Tool $width={46}>
          <ToolIcons><Pressed>{toolIcons.contained}</Pressed>{toolIcons.intersect}</ToolIcons>
          Selection Mode
        </Tool>
      </ToolGroup>
      <ToolGroup $before={1}><Tool $width={40}><ToolIcons>{toolIcons.connect}</ToolIcons>Connect</Tool></ToolGroup>
      <ToolGroup $before={14}><Tool $width={40}><ToolIcons>{toolIcons.insert}</ToolIcons>Insert</Tool></ToolGroup>
      <ToolSet groups={toolGroups} />
      <Zoom>
        <Lens c="#0c8ce0" s={9} sw={1.200} />
        <ZoomBox>
          <ZoomSelect aria-label="Zoom" defaultValue="100%"><option>100%</option></ZoomSelect>
          <Chevron />
        </ZoomBox>
      </Zoom>
      <ToolSet groups={alignGroups} />
    </ToolBar>
    <FormatBar>
      <ChoiceCell width={101} value="Default" label="Style" icon={
        <Icon w={12} h={10} c="#aaa"><path d="M2 1.500h9M2 4.500h5M2 7.500h3M10.500 3.500l-4 4-.5 1.500 1.500-.5 4-4" /></Icon>
      } />
      <ChoiceCell width={68} value="Arial" label="Font" />
      <ChoiceCell width={69} value="Normal" label="Weight" />
      <ChoiceCell width={37} value="13" label="Size" />
      <FormatCell $width={96}>
        <Letter>A</Letter><Letter $bold>B</Letter><Letter $italic>I</Letter><Letter $under>U</Letter>
        <IconButton aria-label="List"><Lines w={10} d="M0 1.500h1.500M3 1.500h7M0 4.500h1.500M3 4.500h7M0 7.500h1.500M3 7.500h7" /></IconButton>
      </FormatCell>
      <FormatCell $width={120}>
        <IconButton $width={15} aria-label="Align left"><Lines d="M0 1.500h9M0 4.500h6M0 7.500h9" /></IconButton>
        <IconButton $width={15} aria-label="Align center"><Lines d="M0 1.500h9M2 4.500h5M0 7.500h9" /></IconButton>
        <IconButton $width={15} aria-label="Align right"><Lines d="M0 1.500h9M3 4.500h6M0 7.500h9" /></IconButton>
        <IconButton $width={15} aria-label="Justify"><Lines d="M0 1.500h9M0 4.500h9M0 7.500h6" /></IconButton>
        <IconButton $width={16} aria-label="Align top"><Lines d="M0 .5h10M2 3.500h6" /></IconButton>
        <IconButton $width={15} aria-label="Align middle"><Lines d="M0 3.500h10M0 6.500h10" /></IconButton>
        <IconButton $width={15} aria-label="Align bottom"><Lines d="M2 5.500h6M0 8.500h10" /></IconButton>
      </FormatCell>
      <FormatCell $width={62} $dark>
        <Caption>Fill:</Caption>
        <IconButton $width={22} aria-label="Fill color"><Icon w={8} h={8} c="#ccc"><rect x=".5" y=".5" width="7" height="7" rx="1" /></Icon></IconButton>
        <IconButton $width={15} aria-label="Fill image"><Icon w={8} h={8} c="#bbb"><rect x=".5" y=".5" width="7" height="7" rx="1" fill="#ccc" /></Icon></IconButton>
      </FormatCell>
      <FormatCell $width={113} $gap={5} $dark>
        <Caption>Border:</Caption>
        <Field $width={14} aria-label="Border width" defaultValue="1" />
        <IconButton $width={14} aria-label="Border color"><Icon w={8} h={8}><path d="M0 0h8v8H0z" fill="#ccc" stroke="none" /></Icon></IconButton>
        <IconButton $width={12} aria-label="Border style"><Icon w={10} h={8} c="#ccc"><path d="M0 .5h10" strokeDasharray="1 1" /><path d="M0 4h10" strokeDasharray="3 1" /><path d="M0 7.500h10" strokeDasharray="2 1" /></Icon></IconButton>
        <IconButton $width={12} aria-label="Arrow style"><Icon w={9} h={8} c="#ccc"><path d="M0 2h9M2 .3L.3 2 2 3.700M0 6h9M7 4.300L8.700 6 7 7.700" /></Icon></IconButton>
      </FormatCell>
      <FormatCell $width={176} $gap={8} $dark>
        <FieldLabel><Field $width={21} />X</FieldLabel>
        <FieldLabel><Field $width={21} />Y</FieldLabel>
        <FieldLabel><Field $width={21} />W</FieldLabel>
        <IconButton $width={5} aria-label="Lock ratio"><Icon w={7} h={8} c="#777"><path d="M0 4h5v4H0z" fill="#777" stroke="none" /><path d="M3.500 4V2a1.500 1.500 0 013 0v.8" /></Icon></IconButton>
        <FieldLabel><Field $width={19} />H</FieldLabel>
        <IconButton $width={9} aria-label="Visibility"><Icon w={9} h={6} c="#ccc" sw={0.8}><ellipse cx="4.500" cy="3" rx="4" ry="2.500" /><circle cx="4.500" cy="3" r="1.200" /></Icon></IconButton>
      </FormatCell>
    </FormatBar>
  </>
);

const LeftPanes = () => (
  <Sidebar>
    <PaneTabs><PaneTab $on $before={8}>PAGES</PaneTab><PaneTab $before={106}>OUTLINE</PaneTab></PaneTabs>
    <SearchRow>
      <Lens />
      <SearchInput aria-label="Search pages" />
      <IconButton $width={7} aria-label="Add page"><Icon w={7} h={8} c="#999" sw={0.8}><path d="M.5.5h6v7h-6zM3.500 2.300v3.400M1.800 4h3.400" /></Icon></IconButton>
      <IconButton $width={10} aria-label="Add folder"><Icon w={10} h={8} c="#999" sw={0.8}><path d="M.5.5h3l1 1.300h5v5.700h-9z" /></Icon></IconButton>
    </SearchRow>
    <Tree>
      {tree.map(([name, kind]) => {
        const folder = kind === "open" || kind === "closed";
        return (
          <TreeRow key={name} $folder={folder} $on={kind === "on"}>
            {folder ? <><Twist open={kind === "open"} /><FolderIcon /></> : <SheetIcon />}
            {name}
          </TreeRow>
        );
      })}
    </Tree>
    <Libraries>
      <PaneTabs><PaneTab $on $before={8}>LIBRARIES</PaneTab><PaneTab $before={94}>MASTERS</PaneTab></PaneTabs>
      <SearchRow>
        <Lens />
        <SearchInput aria-label="Search libraries" />
        <IconButton $width={7} aria-label="Add library"><Icon w={7} h={7} c="#888" sw={0.8}><path d="M3.500 0v7M0 3.500h7" /></Icon></IconButton>
        <IconButton $width={10} aria-label="Library windows"><Icon w={10} h={8} c="#888" sw={0.8}><path d="M.5 3.500h6v4h-6zM1.500 3.500v-1.300h6v4h-1M3 2.200V.6h6.500v4.200H7.500" /></Icon></IconButton>
        <IconButton $width={5} aria-label="Library options"><Icon w={3} h={8}><g fill="#888" stroke="none"><circle cx="1.500" cy="1" r=".9" /><circle cx="1.500" cy="4" r=".9" /><circle cx="1.500" cy="7" r=".9" /></g></Icon></IconButton>
      </SearchRow>
      <LibrarySelect>
        <LibraryChoice aria-label="Library" defaultValue="Default"><option>Default</option></LibraryChoice>
        <Icon w={5} h={9} c="#aaa" sw={0.8}><path d="M.5 3l2-2 2 2M.5 6l2 2 2-2" /></Icon>
      </LibrarySelect>
      <LibraryGroup>Common ▾</LibraryGroup>
      <Widgets>
        {["#bbb", "#e4e4e4", "#bbb"].map((c, i) => (
          <Icon key={i} w={19} h={8} c={c}><path d="M.5.5h18v7H.5z" fill="#eee" /></Icon>
        ))}
        <Icon w={14} h={14} c="#999"><circle cx="7" cy="7" r="6.500" /></Icon>
        <Icon w={19} h={8} c="#bbb"><path d="M.5.5h18v7H.5z" /></Icon>
      </Widgets>
    </Libraries>
  </Sidebar>
);

export default function App() {
  return (
    <Screen>
      <GlobalStyle />
      <TopBars />
      <Work>
        <LeftPanes />
        <Doc>
          <DocTabs>
            {docTabs.map(([name, width], i) => (
              <DocTab key={name} $width={width} $on={i === 0}>
                <button>{name}</button>
                <button aria-label={`Close ${name}`}><Cross /></button>
              </DocTab>
            ))}
            <TabMenu aria-label="All tabs"><Caret c="#777" /></TabMenu>
          </DocTabs>
          <PageBar>
            <Icon w={11} h={11} c="#999" sw={0.8}><path d="M4 9H.5V.5h10V4M6 10.500h4.500v-6H8.200M4 9v1.500h4V7.500" /></Icon>
            <SizeChip>1600*900</SizeChip>
          </PageBar>
          <Stage>
            <RulerCell><Icon w={9} h={10} c="#888" sw={0.8}><circle cx="4.500" cy="5" r="2.500" /><path d="M4.500 1v8M.5 5h8" /></Icon></RulerCell>
            <RulerCell><Rulers.Horizontal /></RulerCell>
            <RulerCell><Rulers.Vertical /></RulerCell>
            <Viewport>
              <Dashboard />
              <Watermark><WeChatIcon />公众号· 点点编程技术</Watermark>
            </Viewport>
          </Stage>
        </Doc>
        <Inspector>
          <InspectorRow $height={100} /><InspectorRow $height={29} /><InspectorRow $height={28} /><InspectorRow $height={10} />
        </Inspector>
      </Work>
    </Screen>
  );
}
